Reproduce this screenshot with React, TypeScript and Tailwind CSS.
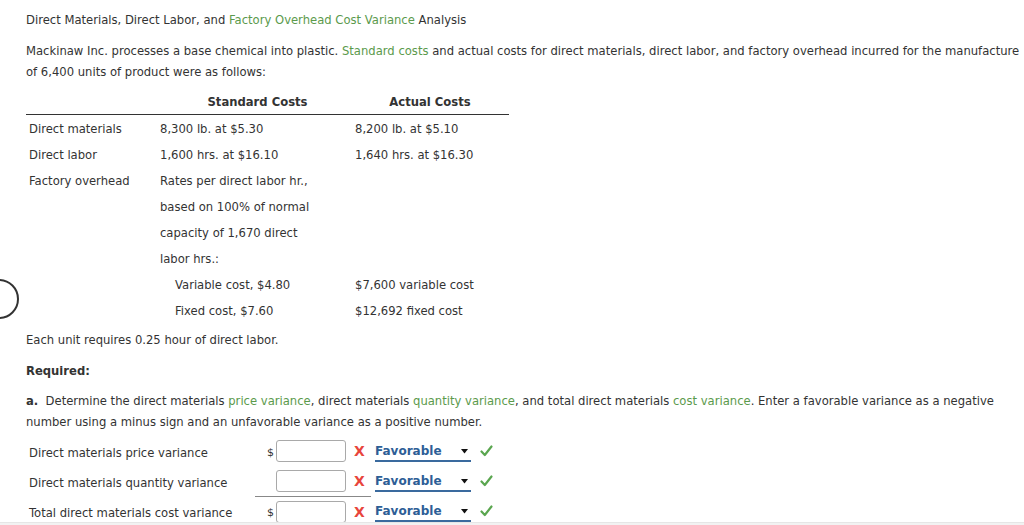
import React from 'react';

const G = ({ children }: { children: React.ReactNode }) => <span className="text-[#5b9a4c]">{children}</span>;

const rows: [string, string, string, boolean?][] = [
  ['Direct materials', '8,300 lb. at $5.30', '8,200 lb. at $5.10'],
  ['Direct labor', '1,600 hrs. at $16.10', '1,640 hrs. at $16.30'],
  ['Factory overhead', 'Rates per direct labor hr.,', ''],
  ['', 'based on 100% of normal', ''],
  ['', 'capacity of 1,670 direct', ''],
  ['', 'labor hrs.:', ''],
  ['', 'Variable cost, $4.80', '$7,600 variable cost', true],
  ['', 'Fixed cost, $7.60', '$12,692 fixed cost', true],
];

const answers = [
  { label: 'Direct materials price variance', dollar: true },
  { label: 'Direct materials quantity variance', dollar: false },
  { label: 'Total direct materials cost variance', dollar: true },
];

const Check = () => (
  <svg width="13" height="12" viewBox="0 0 13 12" className="ml-[9px]">
    <path d="M1.5 6.5 L4.8 10 L11.5 1.5" fill="none" stroke="#5aa64f" strokeWidth="2.2" strokeLinecap="round" strokeLinejoin="round" />
  </svg>
);

const AnswerRow = ({ label, dollar, line }: { label: string; dollar: boolean; line?: boolean }) => (
  <div className="flex items-center h-[30px]">
    <div className="w-[229px] pl-[3px] pt-[4px]">{label}</div>
    <div className={`flex items-center h-full w-[116px] pl-[12px] ${line ? 'border-t border-[#888]' : ''}`}>
      <span className="w-[9px] text-[11px] pt-[2px]">{dollar ? '$' : ''}</span>
      <div className="w-[70px] h-[22px] border border-[#a9a9a9] rounded-[3px] bg-white" />
      <span className="text-[#e8453c] font-bold text-[14px] ml-[8px] leading-none">X</span>
    </div>
    <div className="flex items-center justify-between w-[96px] h-[19px] border-b-2 border-[#3a6a9e] ml-[4px] pr-[3px] mt-[2px]">
      <span className="text-[#2d5e96] font-bold text-[12px]">Favorable</span>
      <svg width="7" height="5" viewBox="0 0 7 5">
        <path d="M0 0 H7 L3.5 4.5 Z" fill="#111" />
      </svg>
    </div>
    <Check />
  </div>
);

export default function App() {
  return (
    <div className="relative w-[1024px] h-[525px] overflow-hidden bg-white text-[#333] text-[11.6px] leading-[21px]" style={{ fontFamily: '"DejaVu Sans", Verdana, sans-serif' }}>
      <div className="absolute left-[-21px] top-[279px] w-[40px] h-[40px] rounded-full border-2 border-[#333] flex items-center justify-end pr-[17px]">
        <svg width="8" height="14" viewBox="0 0 8 14">
          <path d="M6.5 1 L1.5 7 L6.5 13" fill="none" stroke="#333" strokeWidth="2" strokeLinecap="round" />
        </svg>
      </div>
      <div className="pl-[26px] pt-[10px]">
        <p>
          Direct Materials, Direct Labor, and <G>Factory Overhead Cost Variance</G> Analysis
        </p>
        <p className="mt-[10px] whitespace-nowrap">
          Mackinaw Inc. processes a base chemical into plastic. <G>Standard costs</G> and actual costs for direct materials, direct labor, and factory overhead incurred for the manufacture
        </p>
        <p>of 6,400 units of product were as follows:</p>

        <div className="w-[483px] mt-[8px]">
          <div className="grid grid-cols-[134px_195px_1fr] h-[24px] border-b border-[#333] font-bold items-center">
            <div />
            <div className="text-center">Standard Costs</div>
            <div className="text-center pr-[4px]">Actual Costs</div>
          </div>
          {rows.map(([a, b, c, indent], i) => (
            <div key={i} className="grid grid-cols-[134px_195px_1fr] h-[26px] items-center pt-[2px]">
              <div className="pl-[3px]">{a}</div>
              <div className={indent ? 'pl-[15px]' : ''}>{b}</div>
              <div>{c}</div>
            </div>
          ))}
        </div>

        <p className="mt-[7px]">Each unit requires 0.25 hour of direct labor.</p>
        <p className="mt-[10px] font-bold">Required:</p>
        <p className="mt-[9px] whitespace-nowrap">
          <span className="font-bold">a.</span>&nbsp; Determine the direct materials <G>price variance</G>, direct materials <G>quantity variance</G>, and total direct materials <G>cost variance</G>. Enter a favorable variance as a negative
        </p>
        <p>number using a minus sign and an unfavorable variance as a positive number.</p>

        <div className="mt-[3px]">
          {answers.map((r, i) => (
            <AnswerRow key={i} label={r.label} dollar={r.dollar} line={i === 2} />
          ))}
        </div>
      </div>
      <div className="absolute left-0 right-0 bottom-0 h-[3px] bg-[#f2f2f2] border-t border-[#e6e6e6]" />
    </div>
  );
}
